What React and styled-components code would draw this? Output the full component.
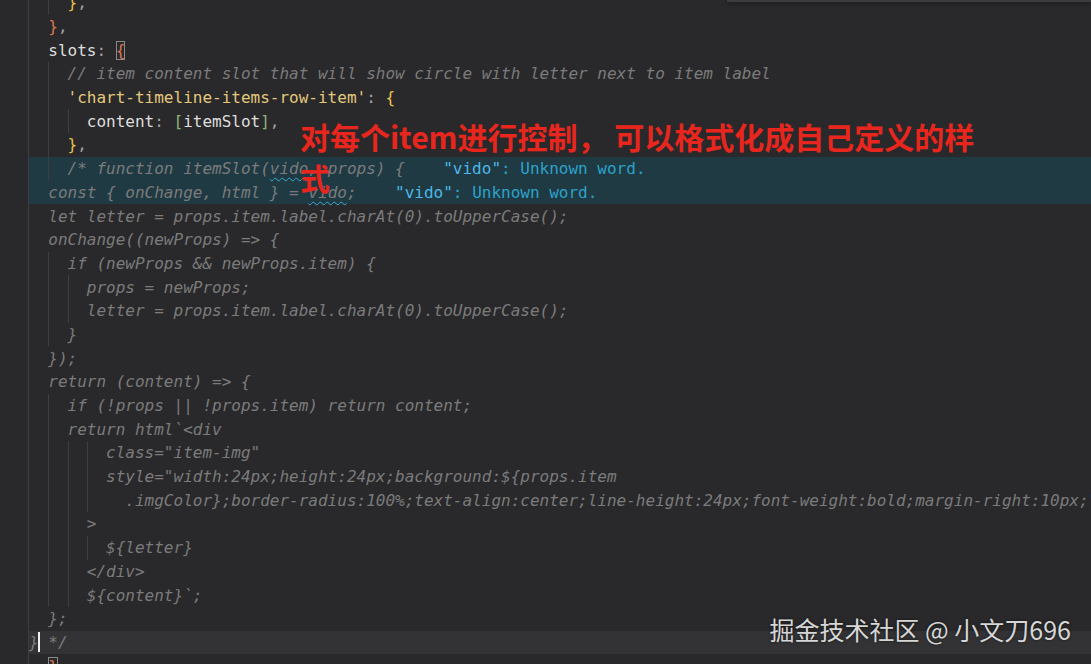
import React from "react";
import styled, { createGlobalStyle, css } from "styled-components";

const GlobalStyle = createGlobalStyle`
  html, body {
    margin: 0;
    padding: 0;
    background: #29292b;
    overflow: hidden;
  }
`;

const colors = {
  text: "#dedede",
  punct: "#a3a3a3",
  yellow: "#e6c24c",
  orange: "#d8764f",
  string: "#e3c87c",
  green: "#8fb47a",
  comment: "#7b7b7b",
};

// each line: indent (in columns), tokens [kind, text], optional highlight / note
const lines = [
  { indent: 4, tokens: [["yellow", "}"], ["punct", ","]] },
  { indent: 2, tokens: [["orange", "}"], ["punct", ","]] },
  { indent: 2, tokens: [["text", "slots"], ["punct", ": "], ["box", "{"]] },
  {
    indent: 4,
    tokens: [["comment", "// item content slot that will show circle with letter next to item label"]],
  },
  {
    indent: 4,
    tokens: [["string", "'chart-timeline-items-row-item'"], ["punct", ": "], ["yellow", "{"]],
  },
  {
    indent: 6,
    tokens: [
      ["text", "content"],
      ["punct", ": "],
      ["green", "["],
      ["text", "itemSlot"],
      ["green", "]"],
      ["punct", ","],
    ],
  },
  { indent: 4, tokens: [["yellow", "}"], ["punct", ","]] },
  {
    indent: 4,
    hl: "error",
    tokens: [["comment", "/* function itemSlot("], ["wavy", "vido"], ["comment", ", props) {"]],
    note: true,
  },
  {
    indent: 2,
    hl: "error",
    tokens: [["comment", "const { onChange, html } = "], ["wavy", "vido"], ["comment", ";"]],
    note: true,
  },
  { indent: 2, tokens: [["comment", "let letter = props.item.label.charAt(0).toUpperCase();"]] },
  { indent: 2, tokens: [["comment", "onChange((newProps) => {"]] },
  { indent: 4, tokens: [["comment", "if (newProps && newProps.item) {"]] },
  { indent: 6, tokens: [["comment", "props = newProps;"]] },
  { indent: 6, tokens: [["comment", "letter = props.item.label.charAt(0).toUpperCase();"]] },
  { indent: 4, tokens: [["comment", "}"]] },
  { indent: 2, tokens: [["comment", "});"]] },
  { indent: 2, tokens: [["comment", "return (content) => {"]] },
  { indent: 4, tokens: [["comment", "if (!props || !props.item) return content;"]] },
  { indent: 4, tokens: [["comment", "return html`<div"]] },
  { indent: 8, tokens: [["comment", 'class="item-img"']] },
  {
    indent: 8,
    tokens: [["comment", 'style="width:24px;height:24px;background:${props.item']],
  },
  {
    indent: 10,
    guides: 8,
    tokens: [
      [
        "comment",
        '.imgColor};border-radius:100%;text-align:center;line-height:24px;font-weight:bold;margin-right:10px;"',
      ],
    ],
  },
  { indent: 6, tokens: [["comment", ">"]] },
  { indent: 8, tokens: [["comment", "${letter}"]] },
  { indent: 6, tokens: [["comment", "</div>"]] },
  { indent: 6, tokens: [["comment", "${content}`;"]] },
  { indent: 2, tokens: [["comment", "};"]] },
  { indent: 0, hl: "current", tokens: [["comment", "}"], ["cursor", ""], ["comment", " */"]] },
  { indent: 2, tokens: [["box", "}"]] },
];

export default function App() {
  return (
    <>
      <GlobalStyle />
      <Screen>
        <Editor>
          {lines.map((line, i) => (
            <CodeLine key={i} line={line} />
          ))}
        </Editor>
        <WidgetEdge />
        <Annotation>
          对每个item进行控制， 可以格式化成自己定义的样
          <br />式
        </Annotation>
        <Watermark>掘金技术社区 @ 小文刀696</Watermark>
      </Screen>
    </>
  );
}

function CodeLine({ line }) {
  const guideCount = Math.floor((line.guides ?? line.indent) / 2);
  const extra = line.indent - guideCount * 2;
  return (
    <Row $hl={line.hl}>
      {Array.from({ length: guideCount }).map((_, g) => (
        <Guide key={g} $first={g === 0} />
      ))}
      {extra > 0 && <Pad style={{ width: `${extra}ch` }} />}
      {line.tokens.map(([kind, text], t) => {
        if (kind === "cursor") return <Cursor key={t} />;
        if (kind === "box") return <BoxBracket key={t}>{text}</BoxBracket>;
        if (kind === "wavy") return <Misspelled key={t}>{text}</Misspelled>;
        return (
          <Token key={t} $kind={kind}>
            {text}
          </Token>
        );
      })}
      {line.note && (
        <Note>
          <NoteWord>"vido"</NoteWord>: Unknown word.
        </Note>
      )}
    </Row>
  );
}

const Screen = styled.div`
  position: relative;
  width: 1091px;
  height: 664px;
  overflow: hidden;
  background: #29292b;
`;

const Editor = styled.div`
  margin-left: 28px;
  margin-top: -9px;
  border-left: 1px solid #3e3e40;
  font-family: "DejaVu Sans Mono", "Liberation Mono", monospace;
  font-size: 16px;
`;

const Row = styled.div`
  display: flex;
  align-items: center;
  height: 23.7px;
  white-space: pre;
  ${(p) =>
    p.$hl === "error" &&
    css`
      background: #1f3a43;
    `}
  ${(p) =>
    p.$hl === "current" &&
    css`
      background: #333335;
    `}
`;

const Guide = styled.span`
  display: inline-block;
  flex: none;
  width: 2ch;
  height: 100%;
  box-sizing: border-box;
  border-left: ${(p) => (p.$first ? "none" : "1px solid #3f3f41")};
`;

const Pad = styled.span`
  display: inline-block;
  flex: none;
  height: 100%;
`;

const Token = styled.span`
  color: ${(p) => colors[p.$kind]};
  font-style: ${(p) => (p.$kind === "comment" ? "italic" : "normal")};
`;

const Misspelled = styled.span`
  color: ${colors.comment};
  font-style: italic;
  text-decoration: underline wavy #3aa9cf;
  text-decoration-thickness: 1px;
  text-underline-offset: 3px;
`;

const BoxBracket = styled.span`
  color: ${colors.orange};
  outline: 1px solid #8a8a8a;
  outline-offset: -1px;
  line-height: 19px;
`;

const Cursor = styled.span`
  display: inline-block;
  width: 0;
  height: 20px;
  position: relative;
  &::after {
    content: "";
    position: absolute;
    left: -1px;
    top: 0;
    width: 2px;
    height: 20px;
    background: #f0f0f0;
  }
`;

const Note = styled.span`
  padding-left: 4ch;
  color: #2ca2cb;
`;

const NoteWord = styled.span`
  color: #4db8e8;
`;

const WidgetEdge = styled.div`
  position: absolute;
  top: 0;
  left: 727px;
  right: 0;
  height: 2px;
  background: #3b3b3d;
  box-shadow: 0 1px 4px rgba(0, 0, 0, 0.55);
`;

const Annotation = styled.div`
  position: absolute;
  left: 300px;
  top: 116px;
  font-family: "Noto Sans CJK SC", "Noto Sans", sans-serif;
  font-weight: 700;
  font-size: 30px;
  line-height: 41px;
  color: #e8261e;
  white-space: nowrap;
`;

const Watermark = styled.div`
  position: absolute;
  right: 20px;
  top: 612px;
  font-family: "Noto Sans CJK SC", "Noto Sans", sans-serif;
  font-size: 25px;
  line-height: 34px;
  color: #d6d6d6;
  text-shadow: 0 0 3px rgba(0, 0, 0, 0.6);
`;
